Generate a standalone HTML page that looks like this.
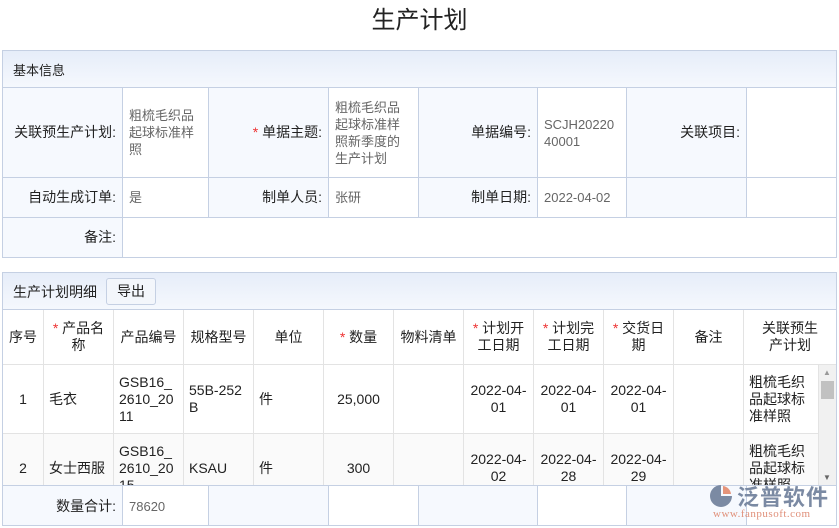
<!DOCTYPE html>
<html><head><meta charset="utf-8"><style>
*{box-sizing:border-box;margin:0;padding:0}
body{width:839px;height:528px;background:#fff;font-family:"Liberation Sans","Noto Sans CJK SC",sans-serif;font-size:13px;color:#222;position:relative;overflow:hidden}
.a{position:absolute}
.title{left:0;width:839px;top:0px;text-align:center;font-size:24px;color:#222}
.box{border:1px solid #c5d0e3}
.hdr{background:linear-gradient(#e6edf9,#f5f8fd);border-bottom:1px solid #c5d0e3}
.c{position:absolute;border-right:1px solid #c5d0e3;border-bottom:1px solid #c5d0e3;display:flex;align-items:center;padding:0 6px;line-height:17px}
.l{background:#f6f9fe;justify-content:flex-end;text-align:right;font-size:14px}
.v{color:#666;font-size:13px}
.s{color:#e33}
.t{position:absolute;border-right:1px solid #e3e3e3;border-bottom:1px solid #e3e3e3;display:flex;align-items:center;justify-content:center;text-align:center;line-height:17px;padding:0 5px;overflow:hidden;font-size:14px}
.tl{justify-content:flex-start;text-align:left}
</style></head><body>
<div class="a title">生产计划</div>

<div class="a box" style="left:2px;top:50px;width:835px;height:208px">
 <div class="a hdr" style="left:0;top:0;width:833px;height:37px;padding:9px 10px;">基本信息</div>
 <div class="c l" style="left:0;top:37px;width:120px;height:90px">关联预生产计划:</div>
 <div class="c v" style="left:120px;top:37px;width:86px;height:90px">粗梳毛织品起球标准样照</div>
 <div class="c l" style="left:206px;top:37px;width:120px;height:90px"><span class="s">*&nbsp;</span>单据主题:</div>
 <div class="c v" style="left:326px;top:37px;width:90px;height:90px">粗梳毛织品起球标准样照新季度的生产计划</div>
 <div class="c l" style="left:416px;top:37px;width:119px;height:90px">单据编号:</div>
 <div class="c v" style="left:535px;top:37px;width:89px;height:90px;word-break:break-all">SCJH2022040001</div>
 <div class="c l" style="left:624px;top:37px;width:120px;height:90px">关联项目:</div>
 <div class="c" style="left:744px;top:37px;width:89px;height:90px;border-right:0"></div>
 <div class="c l" style="left:0;top:127px;width:120px;height:40px">自动生成订单:</div>
 <div class="c v" style="left:120px;top:127px;width:86px;height:40px">是</div>
 <div class="c l" style="left:206px;top:127px;width:120px;height:40px">制单人员:</div>
 <div class="c v" style="left:326px;top:127px;width:90px;height:40px">张研</div>
 <div class="c l" style="left:416px;top:127px;width:119px;height:40px">制单日期:</div>
 <div class="c v" style="left:535px;top:127px;width:89px;height:40px">2022-04-02</div>
 <div class="c l" style="left:624px;top:127px;width:120px;height:40px"></div>
 <div class="c" style="left:744px;top:127px;width:89px;height:40px;border-right:0"></div>
 <div class="c l" style="left:0;top:167px;width:120px;height:39px;border-bottom:0">备注:</div>
</div>

<div class="a box" style="left:2px;top:272px;width:835px;height:254px;overflow:hidden">
 <div class="a hdr" style="left:0;top:0;width:833px;height:37px;"></div>
 <div class="a" style="left:10px;top:9px;font-size:14px">生产计划明细</div>
 <div class="a" style="left:103px;top:5px;width:50px;height:27px;border:1px solid #c5d0e3;border-radius:3px;background:#f3f6fb;text-align:center;line-height:25px;font-size:14px">导出</div>
 <div class="t" style="left:0;top:37px;width:41px;height:55px">序号</div>
 <div class="t" style="left:41px;top:37px;width:70px;height:55px;padding:0 4px"><span><span class="s">* </span>产品名称</span></div>
 <div class="t" style="left:111px;top:37px;width:70px;height:55px">产品编号</div>
 <div class="t" style="left:181px;top:37px;width:70px;height:55px">规格型号</div>
 <div class="t" style="left:251px;top:37px;width:70px;height:55px">单位</div>
 <div class="t" style="left:321px;top:37px;width:70px;height:55px"><span><span class="s">* </span>数量</span></div>
 <div class="t" style="left:391px;top:37px;width:70px;height:55px">物料清单</div>
 <div class="t" style="left:461px;top:37px;width:70px;height:55px;padding:0 8px"><span><span class="s">* </span>计划开工日期</span></div>
 <div class="t" style="left:531px;top:37px;width:70px;height:55px;padding:0 8px"><span><span class="s">* </span>计划完工日期</span></div>
 <div class="t" style="left:601px;top:37px;width:70px;height:55px;padding:0 8px"><span><span class="s">* </span>交货日期</span></div>
 <div class="t" style="left:671px;top:37px;width:70px;height:55px">备注</div>
 <div class="t" style="left:741px;top:37px;width:92px;height:55px;border-right:0;padding:0 12px">关联预生产计划</div>

 <div class="t" style="left:0;top:92px;width:41px;height:69px">1</div>
 <div class="t tl" style="left:41px;top:92px;width:70px;height:69px">毛衣</div>
 <div class="t tl" style="left:111px;top:92px;width:70px;height:69px;word-break:break-all">GSB16_2610_2011</div>
 <div class="t tl" style="left:181px;top:92px;width:70px;height:69px;word-break:break-all">55B-252B</div>
 <div class="t tl" style="left:251px;top:92px;width:70px;height:69px">件</div>
 <div class="t" style="left:321px;top:92px;width:70px;height:69px">25,000</div>
 <div class="t" style="left:391px;top:92px;width:70px;height:69px"></div>
 <div class="t" style="left:461px;top:92px;width:70px;height:69px">2022-04-<br>01</div>
 <div class="t" style="left:531px;top:92px;width:70px;height:69px">2022-04-<br>01</div>
 <div class="t" style="left:601px;top:92px;width:70px;height:69px">2022-04-<br>01</div>
 <div class="t" style="left:671px;top:92px;width:70px;height:69px"></div>
 <div class="t tl" style="left:741px;top:92px;width:75px;height:69px">粗梳毛织品起球标准样照</div>

 <div style="position:absolute;left:0;top:161px;width:816px;height:52px;background:#fafafa"></div>
 <div class="t" style="left:0;top:161px;width:41px;height:69px">2</div>
 <div class="t tl" style="left:41px;top:161px;width:70px;height:69px">女士西服</div>
 <div class="t tl" style="left:111px;top:161px;width:70px;height:69px;word-break:break-all">GSB16_2610_2015</div>
 <div class="t tl" style="left:181px;top:161px;width:70px;height:69px">KSAU</div>
 <div class="t tl" style="left:251px;top:161px;width:70px;height:69px">件</div>
 <div class="t" style="left:321px;top:161px;width:70px;height:69px">300</div>
 <div class="t" style="left:391px;top:161px;width:70px;height:69px"></div>
 <div class="t" style="left:461px;top:161px;width:70px;height:69px">2022-04-<br>02</div>
 <div class="t" style="left:531px;top:161px;width:70px;height:69px">2022-04-<br>28</div>
 <div class="t" style="left:601px;top:161px;width:70px;height:69px">2022-04-<br>29</div>
 <div class="t" style="left:671px;top:161px;width:70px;height:69px"></div>
 <div class="t tl" style="left:741px;top:161px;width:75px;height:69px">粗梳毛织品起球标准样照</div>

 <div class="a" style="left:816px;top:92px;width:17px;height:121px;background:#f1f1f1"></div>
 <div class="a" style="left:820px;top:95px;font-size:8px;color:#999">▲</div>
 <div class="a" style="left:818px;top:108px;width:13px;height:18px;background:#c1c1c1"></div>
 <div class="a" style="left:820px;top:200px;font-size:8px;color:#666">▼</div>

 <div class="a" style="left:0;top:212px;width:833px;height:41px;background:#fff;border-top:1px solid #c5d0e3"></div>
 <div class="c l" style="left:0;top:213px;width:120px;height:40px;border-bottom:0">数量合计:</div>
 <div class="c v" style="left:120px;top:213px;width:86px;height:40px;border-bottom:0">78620</div>
 <div class="c l" style="left:206px;top:213px;width:120px;height:40px;border-bottom:0"></div>
 <div class="c" style="left:326px;top:213px;width:90px;height:40px;border-bottom:0"></div>
 <div class="c l" style="left:416px;top:213px;width:119px;height:40px;border-bottom:0"></div>
 <div class="c" style="left:535px;top:213px;width:89px;height:40px;border-bottom:0"></div>
 <div class="c l" style="left:624px;top:213px;width:120px;height:40px;border-bottom:0"></div>
</div>

<svg class="a" style="left:708px;top:483px" width="26" height="26" viewBox="0 0 26 26"><path d="M13 2 A11 11 0 1 0 24 13 L13 13 Z" fill="#7b8aa3"/><path d="M15 3 A9 9 0 0 1 23 11 L15 11 Z" fill="#e5947a"/></svg>
<div class="a" style="left:737px;top:480px;font-size:22px;color:#7b8aa3;font-weight:bold;letter-spacing:1px">泛普软件</div>
<div class="a" style="left:713px;top:508px;font-size:11px;color:#e0907a;font-family:'Liberation Serif',serif;letter-spacing:0.5px">www.fanpusoft.com</div>
</body></html>
